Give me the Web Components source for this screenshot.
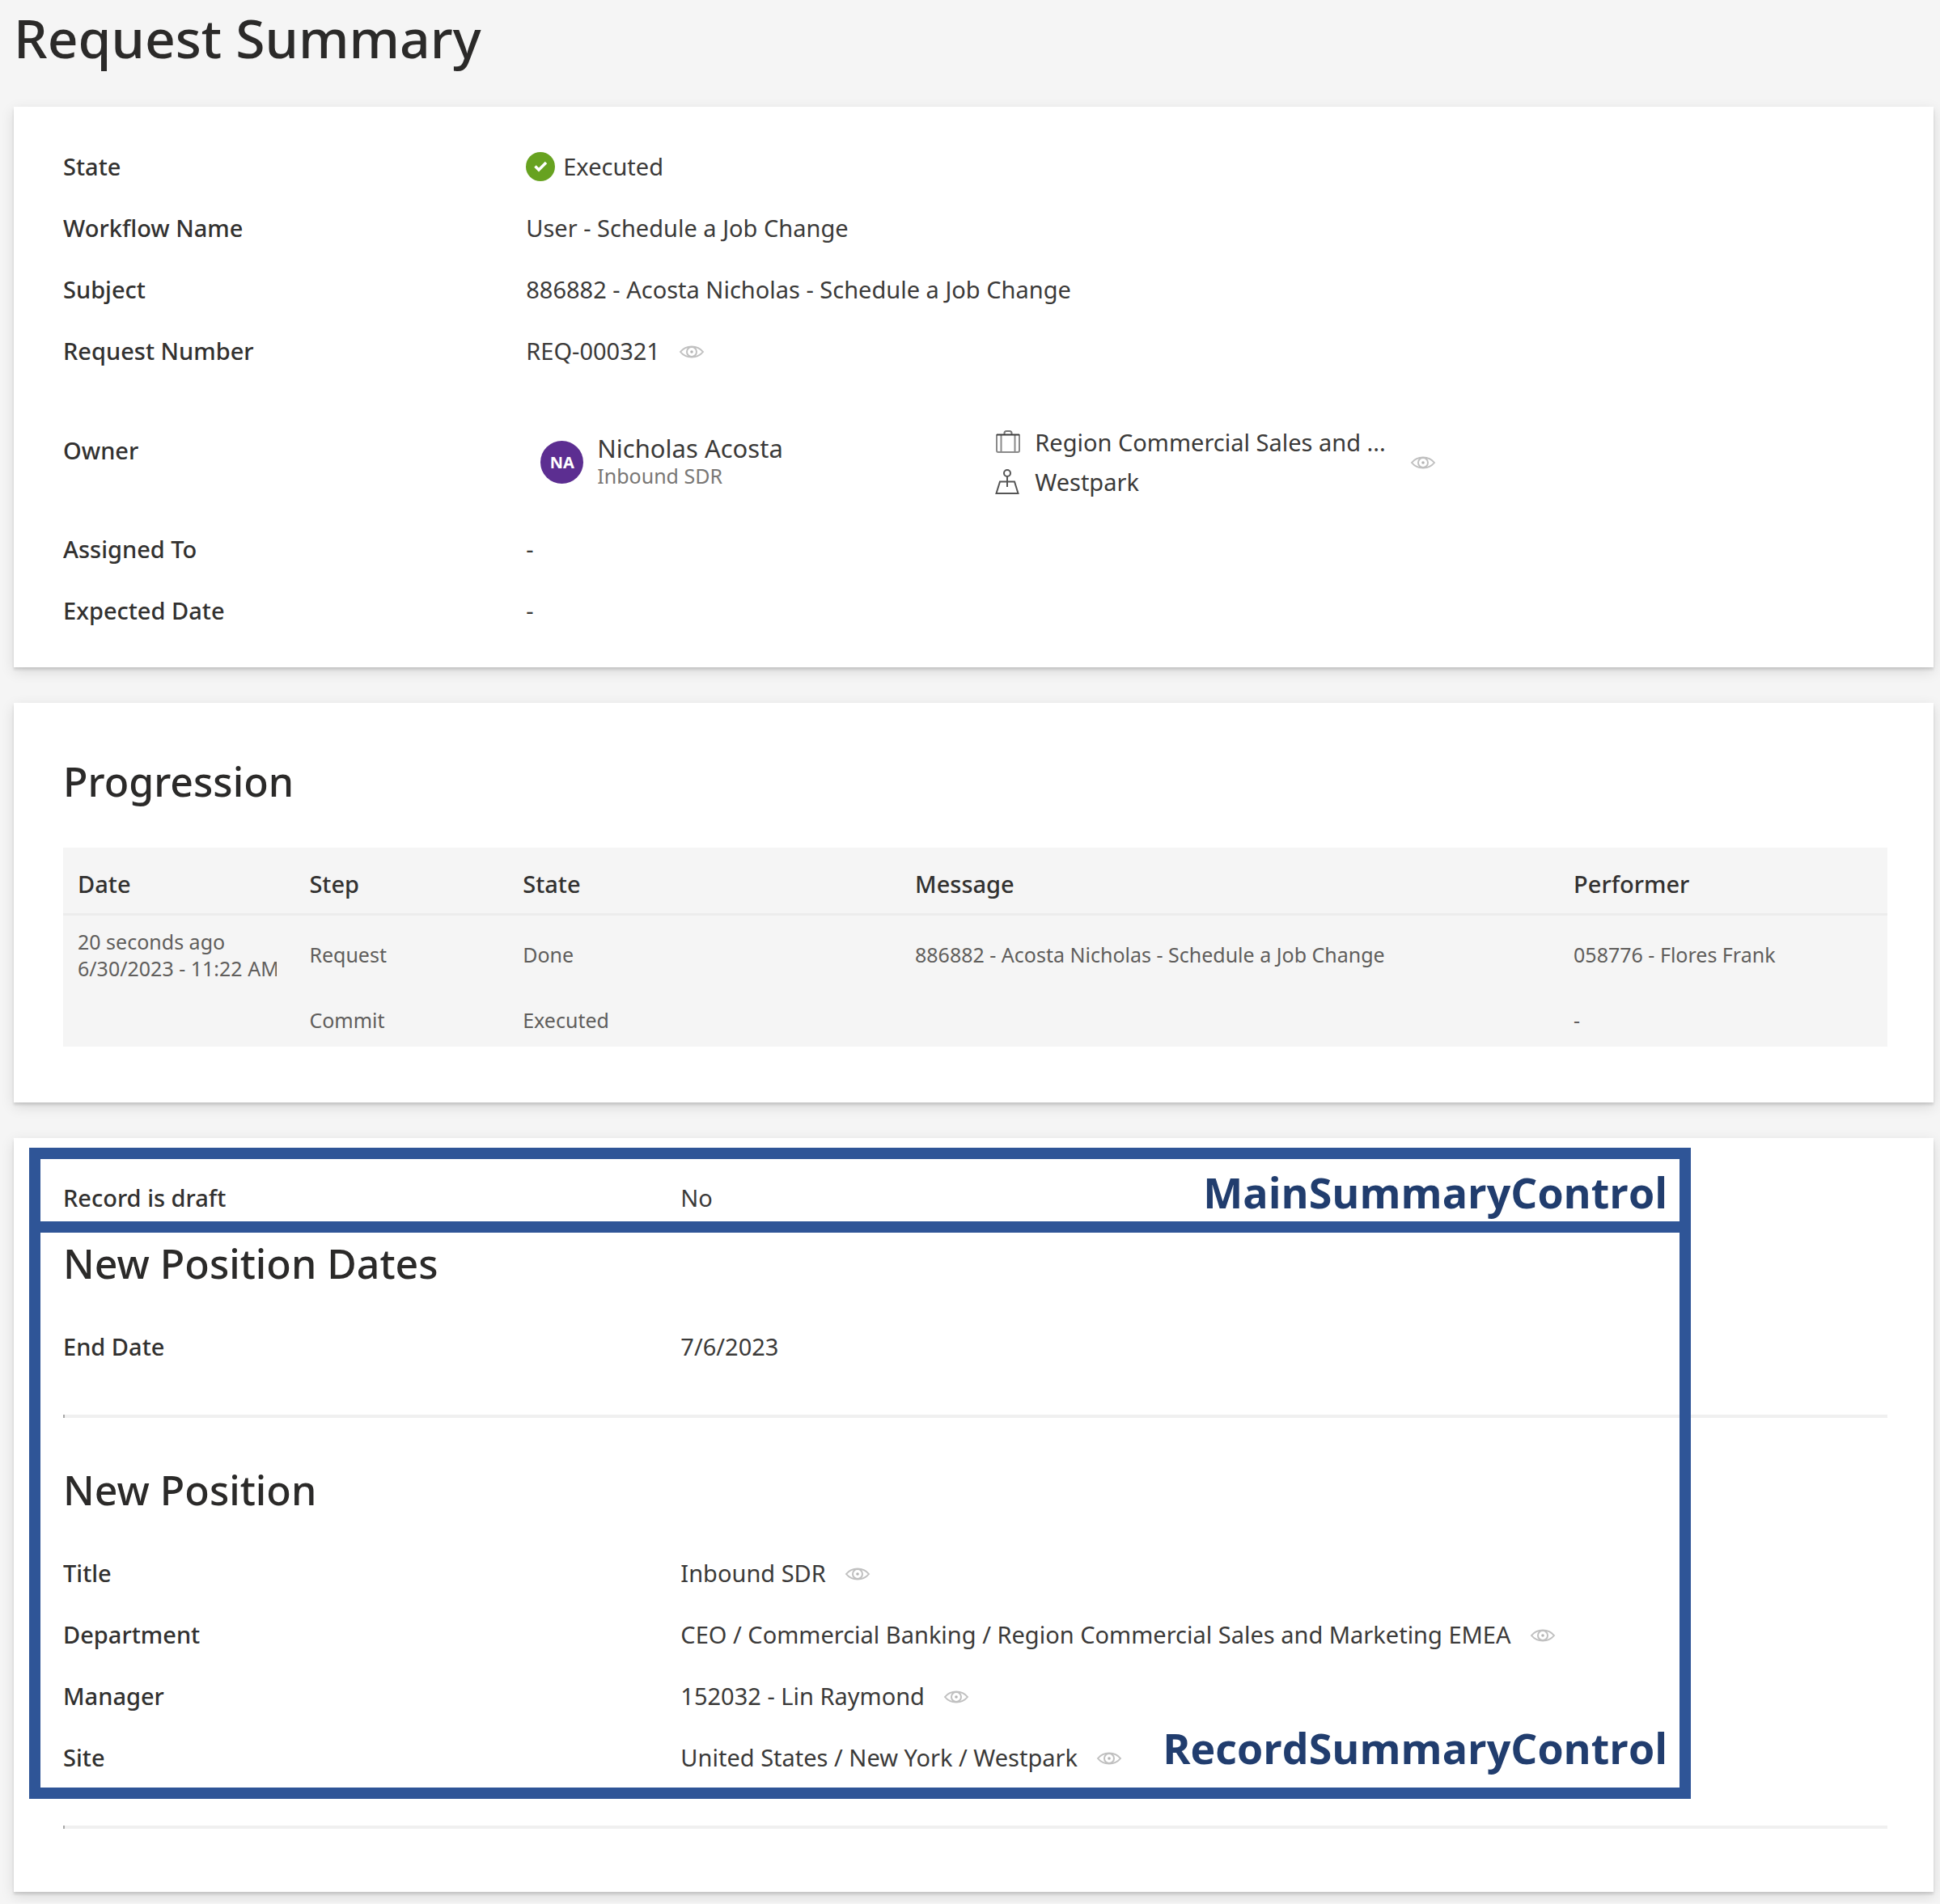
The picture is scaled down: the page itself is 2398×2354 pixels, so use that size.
<!DOCTYPE html>
<html lang="en">
<head>
<meta charset="utf-8">
<title>Request Summary</title>
<style>
  html { background: #f5f5f5; }
  body { margin: 0; font-family: "Noto Sans", "Open Sans", sans-serif; font-size: 29px; line-height: 34px; color: #323130; }
</style>
</head>
<body>
<request-summary></request-summary>

<template id="t-request-summary">
  <style>
    :host { display: block; padding: 0 8px 14px 17px; }
    h1 { margin: 0 0 40px; font-size: 66px; line-height: 92px; font-weight: 500; color: #2b2a29; }
    main { display: flex; flex-direction: column; gap: 44px; }
    .form { padding-top: 36px; padding-bottom: 32px; }
    .progress { padding-top: 65px; padding-bottom: 69px; }
    .record { padding-top: 36px; padding-bottom: 78px; }
    .first { margin-top: 11px; }
  </style>
  <h1>Request Summary</h1>
  <main>
    <summary-card class="form">
      <field-row label="State"><status-mark></status-mark>Executed</field-row>
      <field-row label="Workflow Name">User - Schedule a Job Change</field-row>
      <field-row label="Subject">886882 - Acosta Nicholas - Schedule a Job Change</field-row>
      <field-row label="Request Number">REQ-000321<eye-button></eye-button></field-row>
      <field-row label="Owner" class="tall"><user-persona initials="NA" name="Nicholas Acosta" role-title="Inbound SDR" department="Region Commercial Sales and ..." site="Westpark"></user-persona></field-row>
      <field-row label="Assigned To">-</field-row>
      <field-row label="Expected Date">-</field-row>
    </summary-card>
    <summary-card class="progress">
      <card-section heading="Progression"><progression-table></progression-table></card-section>
    </summary-card>
    <summary-card class="record">
      <field-row wide label="Record is draft">No</field-row>
      <card-section class="first" heading="New Position Dates" ruled>
        <field-row wide label="End Date">7/6/2023</field-row>
      </card-section>
      <card-section heading="New Position" ruled>
        <field-row wide label="Title">Inbound SDR<eye-button></eye-button></field-row>
        <field-row wide label="Department">CEO / Commercial Banking / Region Commercial Sales and Marketing EMEA<eye-button></eye-button></field-row>
        <field-row wide label="Manager">152032 - Lin Raymond<eye-button></eye-button></field-row>
        <field-row wide label="Site">United States / New York / Westpark<eye-button></eye-button></field-row>
      </card-section>
      <callout-frame slot="overlay"></callout-frame>
    </summary-card>
  </main>
</template>

<template id="t-summary-card">
  <style>
    :host { display: block; position: relative; padding-left: 42px; padding-right: 38px; background: #fff;
      box-shadow: 0 3px 3px rgba(0,0,0,.12), 0 5px 16px rgba(0,0,0,.12); }
  </style>
  <slot></slot><slot name="overlay"></slot>
</template>

<template id="t-field-row">
  <style>
    :host { display: flex; align-items: center; min-height: 76px; --label: 25%; }
    :host([wide]) { --label: 33.3333%; }
    :host(.tall) { min-height: 169px; }
    .label { flex: 0 0 var(--label); box-sizing: border-box; padding: 0 19px; font-weight: 500; }
    .value { flex: 1; min-width: 0; display: flex; align-items: center; padding: 0 18px; color: #3b3a39; }
  </style>
  <div class="label"></div>
  <div class="value"><slot></slot></div>
</template>

<template id="t-status-mark">
  <style>:host { display: block; width: 36px; height: 36px; margin-right: 10px; } svg { display: block; }</style>
  <svg width="36" height="36" viewBox="0 0 36 36"><circle cx="18" cy="18" r="18" fill="#67a220"/><path d="M11.500 17.500l4.500 4.500 9-9" fill="none" stroke="#fff" stroke-width="3.500"/></svg>
</template>

<template id="t-eye-button">
  <style>
    :host { display: block; margin-left: 23px; padding-top: 2px; }
    button { display: block; margin: 0; padding: 0; border: 0; background: none; cursor: pointer; }
    svg { display: block; }
  </style>
  <button type="button" aria-label="View"><svg width="32" height="20" viewBox="0 0 32 20" fill="none" stroke="#c0c0c0" stroke-width="2"><path d="M2 10C6 5 10 3.500 16 3.500s10 1.500 14 6.500c-4 5-8 6.500-14 6.500S6 15 2 10z"/><circle cx="16" cy="10" r="6"/><circle cx="16" cy="10" r="1.800" fill="#b4b4b4" stroke="none"/></svg></button>
</template>

<template id="t-user-persona">
  <style>
    :host { display: flex; align-items: center; flex: 1; padding-top: 29px; }
    .who { flex: 0 0 562px; display: flex; align-items: center; gap: 17px; padding-left: 18px; }
    .avatar { width: 53px; height: 53px; border-radius: 50%; background: #5c2e91; color: #fff; font-size: 20px; line-height: 53px; font-weight: 700; text-align: center; }
    .name { font-size: 31px; }
    .role { font-size: 25px; color: #797775; }
    .where { display: flex; flex-direction: column; gap: 15px; }
    .line { display: flex; align-items: center; gap: 17px; }
    svg { display: block; }
    eye-button { margin-left: 30px; }
  </style>
  <div class="who"><div class="avatar"></div><div><div class="name"></div><div class="role"></div></div></div>
  <div class="where">
    <div class="line"><svg width="32" height="32" viewBox="0 0 32 32" fill="none" stroke="#777" stroke-width="2"><path d="M11.500 6V4.500Q11.500 2 14 2h4q2.500 0 2.500 2.500V6"/><path d="M2 6v20q0 2 2 2h24q2 0 2-2V6M7.500 7v20M24.500 7v20" stroke="#8a8a8a"/><path d="M2 6.500h28" stroke="#3c3c3c"/></svg><span class="department"></span></div>
    <div class="line"><svg width="32" height="32" viewBox="0 0 32 32" fill="none" stroke="#555" stroke-width="2"><circle cx="15" cy="5" r="4"/><path d="M15 9v13M6 15.500h18L28.500 30h-27z"/></svg><span class="site"></span></div>
  </div>
  <eye-button></eye-button>
</template>

<template id="t-card-section">
  <style>
    :host { display: block; }
    h2 { margin: 0 19px 33px; font-size: 50px; line-height: 64px; font-weight: 500; color: #2b2a29; }
    hr { display: none; }
    :host([ruled]) hr { display: block; height: 4px; margin: 46px 19px 0; border: 0; border-left: 2px solid #a8a8a8; background: #f0f0f0; }
    :host([ruled]:not(:last-of-type)) hr { margin-bottom: 57px; }
  </style>
  <h2></h2><slot></slot><hr>
</template>

<template id="t-progression-table">
  <style>
    :host { display: block; padding: 17px 19px 0; }
    table { width: 100%; table-layout: fixed; border-collapse: collapse; background: #f5f5f5; }
    th, td { padding: 0 22px 0 18px; text-align: left; white-space: nowrap; }
    th { height: 82px; border-bottom: 3px solid #ececec; font-weight: 500; padding-top: 9px; box-sizing: border-box; }
    td { height: 64px; font-size: 25px; line-height: 33px; color: #605e5c; }
    .tall td { height: 98px; }
    td div { overflow: hidden; }
  </style>
  <table>
    <colgroup><col style="width:12.7%"><col style="width:11.7%"><col style="width:21.5%"><col style="width:36.1%"><col></colgroup>
    <thead><tr><th>Date</th><th>Step</th><th>State</th><th>Message</th><th>Performer</th></tr></thead>
    <tbody>
      <tr class="tall"><td><div>20 seconds ago<br>6/30/2023 - 11:22 AM</div></td><td>Request</td><td>Done</td><td>886882 - Acosta Nicholas - Schedule a Job Change</td><td>058776 - Flores Frank</td></tr>
      <tr><td></td><td>Commit</td><td>Executed</td><td></td><td>-</td></tr>
    </tbody>
  </table>
</template>

<template id="t-callout-frame">
  <style>
    :host { position: absolute; inset: 12px 300px 115px 19px; box-sizing: border-box; border: 14px solid #2f5597; display: flex; flex-direction: column; pointer-events: none; color: #213d6e; font-family: "Open Sans", sans-serif; font-size: 52px; line-height: 72px; font-weight: 700; }
    div { display: flex; justify-content: flex-end; padding-right: 15px; }
    .main { border-bottom: 14px solid #2f5597; padding-top: 5px; }
    .rec { flex: 1; align-items: flex-end; padding-bottom: 13px; }
  </style>
  <div class="main">MainSummaryControl</div>
  <div class="rec">RecordSummaryControl</div>
</template>

<script>
  class Part extends HTMLElement {
    constructor() {
      super();
      const template = document.getElementById('t-' + this.localName);
      this.attachShadow({ mode: 'open' }).append(template.content.cloneNode(true));
    }
    fill(selector, attribute) {
      this.shadowRoot.querySelector(selector).textContent = this.getAttribute(attribute) || '';
    }
  }
  class FieldRow extends Part {
    connectedCallback() { this.fill('.label', 'label'); }
  }
  class CardSection extends Part {
    connectedCallback() { this.fill('h2', 'heading'); }
  }
  class UserPersona extends Part {
    connectedCallback() {
      this.fill('.avatar', 'initials');
      this.fill('.name', 'name');
      this.fill('.role', 'role-title');
      this.fill('.department', 'department');
      this.fill('.site', 'site');
    }
  }
  customElements.define('status-mark', class extends Part {});
  customElements.define('eye-button', class extends Part {});
  customElements.define('user-persona', UserPersona);
  customElements.define('field-row', FieldRow);
  customElements.define('card-section', CardSection);
  customElements.define('progression-table', class extends Part {});
  customElements.define('callout-frame', class extends Part {});
  customElements.define('summary-card', class extends Part {});
  customElements.define('request-summary', class extends Part {});
</script>
</body>
</html>
